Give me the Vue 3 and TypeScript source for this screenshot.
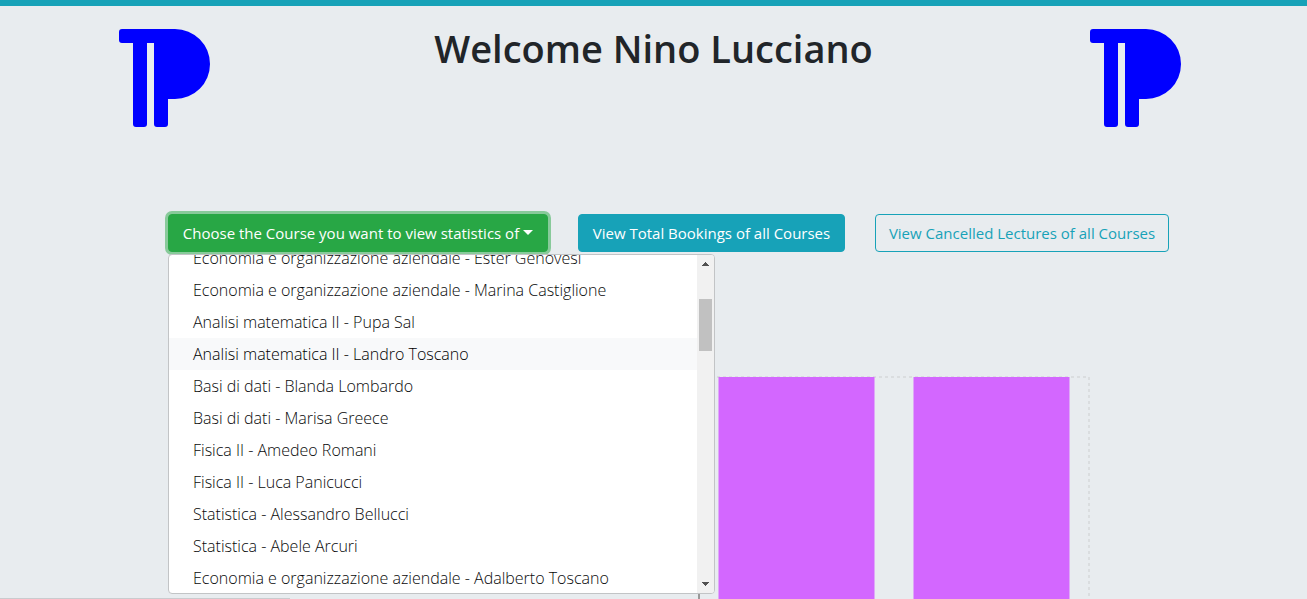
<script setup lang="ts">
import { onMounted, ref } from 'vue'

const courses: string[] = [
  'Economia e organizzazione aziendale - Ester Genovesi',
  'Economia e organizzazione aziendale - Marina Castiglione',
  'Analisi matematica II - Pupa Sal',
  'Analisi matematica II - Landro Toscano',
  'Basi di dati - Blanda Lombardo',
  'Basi di dati - Marisa Greece',
  'Fisica II - Amedeo Romani',
  'Fisica II - Luca Panicucci',
  'Statistica - Alessandro Bellucci',
  'Statistica - Abele Arcuri',
  'Economia e organizzazione aziendale - Adalberto Toscano',
]

const open = ref(true)
const active = ref(3)
const list = ref<HTMLElement | null>(null)

// Chart geometry: each bar fills 80% of its band.
const band = 195
const bars = [0, 1].map((i) => ({ x: 1 + i * band + band * 0.1, width: band * 0.8 }))

onMounted(() => {
  if (list.value) list.value.scrollTop = 13
})
</script>

<template>
  <div class="page">
    <header class="header">
      <svg class="logo" viewBox="0 0 98 98" aria-hidden="true">
        <path d="M3 0H56A35 35 0 0 1 56 70H49V95Q49 98 46 98H38Q35 98 35 95V14H28V95Q28 98 25 98H17Q14 98 14 95V14H3Q0 14 0 11V3Q0 0 3 0Z" />
      </svg>
      <h1 class="title">Welcome Nino Lucciano</h1>
      <svg class="logo" viewBox="0 0 98 98" aria-hidden="true">
        <path d="M3 0H56A35 35 0 0 1 56 70H49V95Q49 98 46 98H38Q35 98 35 95V14H28V95Q28 98 25 98H17Q14 98 14 95V14H3Q0 14 0 11V3Q0 0 3 0Z" />
      </svg>
    </header>

    <div class="actions">
      <div class="dropdown">
        <button class="btn choose" type="button" aria-haspopup="true" :aria-expanded="open" @click="open = !open">
          Choose the Course you want to view statistics of<span class="caret"></span>
        </button>
        <div v-show="open" class="menu">
          <div ref="list" class="list">
            <button
              v-for="(course, i) in courses"
              :key="course"
              class="item"
              :class="{ active: i === active }"
              type="button"
              @mouseenter="active = i"
            >{{ course }}</button>
          </div>
          <div class="scrollbar" aria-hidden="true">
            <svg class="arrow" viewBox="0 0 17 17"><path d="M8 7h1v1h1v1h1v1h1v1H5v-1h1V9h1V8h1z" /></svg>
            <div class="track"><div class="thumb"></div></div>
            <svg class="arrow" viewBox="0 0 17 17"><path d="M5 6h7v1h-1v1h-1v1H9v1H8V9H7V8H6V7H5z" /></svg>
          </div>
        </div>
      </div>
      <button class="btn total" type="button">View Total Bookings of all Courses</button>
      <button class="btn cancelled" type="button">View Cancelled Lectures of all Courses</button>
    </div>

    <div class="chart">
      <svg width="392" height="223" viewBox="0 0 392 223" role="img">
        <line class="grid" x1="1" y1="1" x2="391" y2="1" />
        <line class="grid" x1="391" y1="1" x2="391" y2="223" />
        <line class="axis" x1="1" y1="1" x2="1" y2="223" />
        <rect v-for="bar in bars" :key="bar.x" class="bar" :x="bar.x" y="1" :width="bar.width" height="222" />
      </svg>
    </div>
    <div class="status"></div>
  </div>
</template>

<style>
body {
  margin: 0;
  background: #e8ecef;
}
</style>

<style scoped>
.page {
  border-top: 6px solid #17a2b8;
  background: #e8ecef;
  color: #212529;
  font-family: "Open Sans", "Noto Sans", sans-serif;
  font-size: 15px;
  line-height: 24px;
}
.header {
  display: flex;
  justify-content: space-between;
  padding: 23px 119px 0;
}
.logo {
  width: 98px;
  height: 98px;
  fill: #0000ff;
}
.title {
  margin: -5px 0 0;
  font-size: 38px;
  font-weight: 600;
  line-height: 48px;
  white-space: nowrap;
}
.actions {
  display: flex;
  justify-content: center;
  gap: 30px;
  margin-top: 87px;
  padding-left: 30px;
}
.dropdown {
  position: relative;
}
.btn {
  box-sizing: border-box;
  height: 38px;
  padding: 0;
  border: 1px solid #17a2b8;
  border-radius: 4px;
  font: inherit;
  white-space: nowrap;
  cursor: pointer;
}
.choose {
  width: 380px;
  border-color: #28a745;
  background: #28a745;
  color: #fff;
  box-shadow: 0 0 0 3px rgba(40, 167, 69, 0.5);
}
.caret {
  display: inline-block;
  margin-left: 4px;
  vertical-align: 4px;
  border-top: 5px solid;
  border-right: 5px solid transparent;
  border-left: 5px solid transparent;
}
.total {
  width: 267px;
  background: #17a2b8;
  color: #fff;
}
.cancelled {
  width: 294px;
  background: transparent;
  color: #17a2b8;
}
.menu {
  position: absolute;
  top: 100%;
  left: 0;
  z-index: 10;
  box-sizing: border-box;
  display: flex;
  width: 547px;
  height: 340px;
  margin-top: 2px;
  overflow: hidden;
  border: 1px solid #c2c4c6;
  border-radius: 4px;
  background: #fff;
}
.list {
  flex: 1;
  overflow: hidden;
}
.item {
  display: block;
  width: 100%;
  height: 32px;
  padding: 0 24px;
  border: 0;
  background: transparent;
  color: #08090a;
  font: inherit;
  font-size: 16px;
  font-weight: 300;
  text-align: left;
  white-space: nowrap;
}
.item.active {
  background: #f8f9fa;
  color: #000;
}
.scrollbar {
  display: flex;
  flex-direction: column;
  width: 17px;
  background: #f1f1f1;
}
.arrow {
  width: 17px;
  height: 17px;
  fill: #505050;
  shape-rendering: crispEdges;
}
.track {
  flex: 1;
  padding: 27px 2px 0;
}
.thumb {
  height: 52px;
  background: #c1c1c1;
}
.chart {
  display: flex;
  justify-content: flex-end;
  margin-top: 124px;
  padding-right: 217px;
}
.grid {
  stroke: #dadddf;
  stroke-width: 2px;
  stroke-dasharray: 3 3;
}
.axis {
  stroke: #999;
  stroke-width: 2px;
}
.bar {
  fill: #d367ff;
}
.status {
  position: fixed;
  bottom: 0;
  left: 0;
  width: 290px;
  height: 1px;
  background: #c9cbce;
}
</style>
